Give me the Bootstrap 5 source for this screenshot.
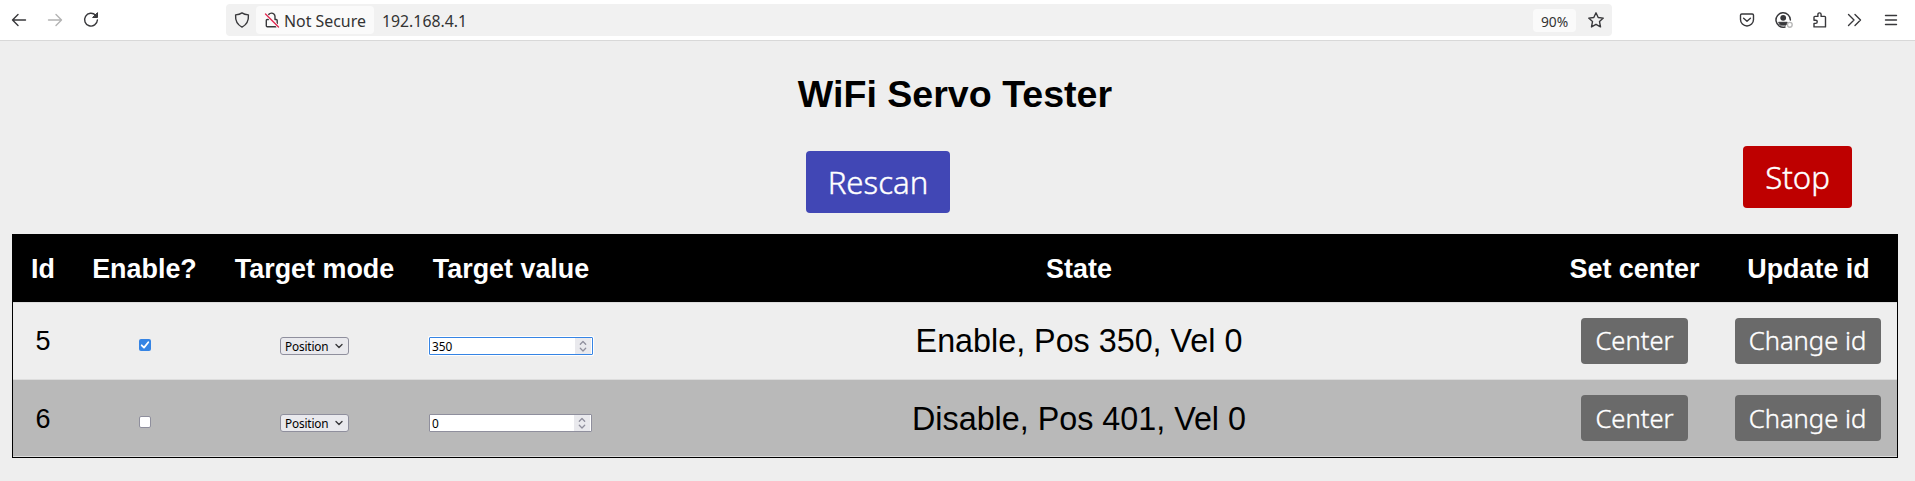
<!DOCTYPE html>
<html lang="en">
<head>
<meta charset="utf-8">
<title>WiFi Servo Tester</title>
<link href="https://cdn.jsdelivr.net/npm/bootstrap@5.3.0/dist/css/bootstrap.min.css" rel="stylesheet">
<style>
body{background:#eee;color:#000;font-family:"Liberation Sans",Arial,sans-serif;overflow:hidden}
svg{display:block;flex:none;fill:none;stroke:#38383b;stroke-width:1.4;stroke-linecap:round;stroke-linejoin:round}
.toolbar{height:41px;background:#fff;border-bottom:1px solid #d8d8d8;padding:4px 16px 0 11px;font-family:"Noto Sans",sans-serif;color:#333}
.nav-icons{width:215px;gap:20px}
.tool-icons{gap:20px}
.tight{margin-right:-1px}
.address{width:1386px;height:32px;background:#f1f1f1;border-radius:4px;padding:0 8px}
.security{width:118px;height:28px;background:#fafafa;border-radius:4px;margin-left:6px;padding-left:8px;font-size:15.9px;gap:4px}
.url{font-size:15.8px;margin-left:8px;line-height:28px;padding-top:2px}
.security span{padding-top:2px;white-space:nowrap;line-height:26px}
.zoomlevel{width:43px;height:23px;background:#fafafa;border-radius:4px;font-size:13.8px;margin-right:12px;line-height:25px}
h1{font-size:37.6px;font-weight:700;line-height:44px;margin:31px 0 0;padding-right:5px}
.actions{height:110px;padding:30px 63px 0 806px}
.act{font-family:"Noto Sans",sans-serif;font-weight:300;-webkit-text-stroke:.4px #fff;color:#fff;border:0;border-radius:4px;padding:0;--bs-btn-hover-color:#fff}
.rescan,.halt{height:62px;font-size:31.2px;line-height:62px}
.rescan{width:144px;background:#4147b5;margin-top:5px}
.halt{width:109px;background:#be0000}
.servos{width:1886px;margin:0 0 0 12px;border:1px solid #000;table-layout:fixed;border-collapse:separate;border-spacing:0;text-align:center;font-size:27px}
.servos th,.servos td{padding:0;vertical-align:middle;border-bottom:1px solid #ddd;line-height:36px}
.servos th{height:68px;background:#000;color:#fff;white-space:nowrap;font-size:26.9px}
.servos td{height:77px}
.servos tr.alt td{background:#b9b9b9}
.servos tr.alt td.shift{padding-top:2px}
.servos td.state{font-size:32.3px}
.small-act{height:46px;font-size:25.6px;line-height:46px;background:#6a6a6a;display:block;margin:auto}
.alt .small-act{padding-top:1px}
.center-act{width:107px}.change-act{width:146px;position:relative;left:-1px}
.tick{width:12px;height:12px;border-radius:2px;margin:8px auto 0;background:#3584e4}
.tick.off{background:#fff;border:1px solid #8f8f9d}
.tick svg{stroke:#fff;stroke-width:1.8}
.mode{width:69px;height:18px;margin:10px auto 0;border:1px solid #8f8f9d;border-radius:3px;background:#e9e9ed;font:11.8px/16px "Noto Sans",sans-serif;padding:0 5px 0 4px;letter-spacing:-.15px}
.amount{width:163px;height:18px;margin:10px 0 0 16px;border:1px solid #8f8f9d;border-radius:1px;background:#fff;font:11.9px/16px "Noto Sans",sans-serif;padding:0 1px 0 2px}
.amount.active{width:164px;border-color:#3584e4;box-shadow:0 0 0 1px #fff}
.spin{width:16px;height:16px;background:#e9e9ed}
.spin svg{stroke:#8f8f9d;stroke-width:1.3}
</style>
</head>
<body>
<header class="toolbar d-flex">
  <div class="nav-icons d-flex align-items-center pb-1">
    <svg width="16" height="16" viewBox="0 0 16 16"><path d="M14.500 8H1.500M7 2.500 1.500 8 7 13.500"/></svg>
    <svg width="16" height="16" viewBox="0 0 16 16" style="stroke:#b3b3b3"><path d="M1.500 8h13M9 2.500 14.500 8 9 13.500"/></svg>
    <svg width="16" height="16" viewBox="0 0 16 16"><path d="M12.600 3.200A6.400 6.400 0 1 0 14.400 8"/><path d="M14.500 1v4.500H10z" fill="#38383b" stroke-width="1"/></svg>
  </div>
  <div class="address d-flex align-items-center">
    <svg width="16" height="16" viewBox="0 0 16 16"><path d="M8 .9C6.300 2.100 4 2.700 1.600 2.900 1.200 8.500 3.200 12.700 8 15.100c4.800-2.400 6.800-6.600 6.400-12.200C12 2.700 9.700 2.100 8 .9z"/></svg>
    <div class="security d-flex align-items-center">
      <svg width="16" height="16" viewBox="0 0 16 16"><path d="M4 4.800A3.500 3.500 0 0 1 11 4.500V7.500h1.200a1 1 0 0 1 1 1V12M4.500 7.500H3.300a1 1 0 0 0-1 1v5.200a1 1 0 0 0 1 1H12"/><path d="m1.500 2 13 13" stroke="#fafafa" stroke-width="2.800"/><path d="m1.500 2 13 13" stroke="#e22850"/></svg>
      <span>Not Secure</span>
    </div>
    <span class="url">192.168.4.1</span>
    <span class="zoomlevel ms-auto text-center">90%</span>
    <svg width="16" height="16" viewBox="0 0 16 16"><path d="m8 .8 2.200 4.700 5.100.6-3.800 3.500 1 5.300L8 12.300l-4.500 2.600 1-5.300L.7 6.100l5.100-.6z"/></svg>
  </div>
  <div class="tool-icons ms-auto d-flex align-items-center pb-1">
    <svg width="16" height="16" viewBox="0 0 16 16"><path d="M2.800 2h10.400c.8 0 1.300.5 1.300 1.300v4.200a6.500 6.500 0 0 1-13 0V3.300C1.500 2.500 2 2 2.800 2zM4.600 6.200 8 9.300l3.400-3.100"/></svg>
    <svg class="tight" width="18" height="16" viewBox="0 0 18 16"><path d="M15.400 8A7.200 7.200 0 1 0 10 15" stroke-width="1.500"/><circle cx="8.200" cy="5.800" r="2.900" fill="#38383b" stroke="none"/><path d="M4 10.300h8.300l-1.300 2.800H5.500z" fill="#38383b" stroke-width="1"/><circle cx="14.800" cy="12.800" r="2.400" stroke="#b8b8b8"/></svg>
    <svg class="tight" width="16" height="16" viewBox="0 0 16 16"><path d="M2 5.300c0-.6.300-.9.900-.9h3V2.500a1.600 1.600 0 0 1 3.200 0v1.900h3.500c.6 0 .9.300.9.900v9.600H2v-3.500h1.700a1.500 1.500 0 0 0 0-3.100H2z"/></svg>
    <svg width="16" height="16" viewBox="0 0 16 16"><path d="M1.500 2.500 7 8l-5.500 5.500M8 2.500 13.500 8 8 13.500"/></svg>
    <svg width="16" height="16" viewBox="0 0 16 16"><path d="M2.500 3.500h11M2.500 8h11M2.500 12.500h11"/></svg>
  </div>
</header>
<main>
  <h1 class="text-center">WiFi Servo Tester</h1>
  <div class="actions d-flex justify-content-between align-items-start">
    <button class="btn act rescan">Rescan</button>
    <button class="btn act halt">Stop</button>
  </div>
  <table class="servos mt-2">
    <colgroup><col style="width:60px"><col style="width:143px"><col style="width:197px"><col style="width:196px"><col style="width:940px"><col style="width:171px"><col style="width:177px"></colgroup>
    <thead><tr><th>Id</th><th>Enable?</th><th>Target mode</th><th>Target value</th><th>State</th><th>Set center</th><th>Update id</th></tr></thead>
    <tbody>
      <tr>
        <td>5</td>
        <td><div class="tick"><svg width="12" height="12" viewBox="0 0 12 12"><path d="m2.700 6.300 2.300 2.300 4.300-5.300"/></svg></div></td>
        <td><div class="mode d-flex align-items-center justify-content-between"><span>Position</span><svg width="8" height="8" viewBox="0 0 8 8"><path d="m1 2.500 3 3 3-3"/></svg></div></td>
        <td><div class="amount active d-flex align-items-center justify-content-between"><span>350</span><span class="spin"><svg width="16" height="16" viewBox="0 0 16 16"><path d="m5.300 6.200 2.700-2.700 2.700 2.700M5.300 10.300 8 13l2.700-2.700"/></svg></span></div></td>
        <td class="state">Enable, Pos 350, Vel 0</td>
        <td><button class="btn act small-act center-act">Center</button></td>
        <td><button class="btn act small-act change-act">Change id</button></td>
      </tr>
      <tr class="alt">
        <td class="shift">6</td>
        <td><div class="tick off"></div></td>
        <td><div class="mode d-flex align-items-center justify-content-between"><span>Position</span><svg width="8" height="8" viewBox="0 0 8 8"><path d="m1 2.500 3 3 3-3"/></svg></div></td>
        <td><div class="amount d-flex align-items-center justify-content-between"><span>0</span><span class="spin"><svg width="16" height="16" viewBox="0 0 16 16"><path d="m5.300 6.200 2.700-2.700 2.700 2.700M5.300 10.300 8 13l2.700-2.700"/></svg></span></div></td>
        <td class="state shift">Disable, Pos 401, Vel 0</td>
        <td><button class="btn act small-act center-act">Center</button></td>
        <td><button class="btn act small-act change-act">Change id</button></td>
      </tr>
    </tbody>
  </table>
</main>
<script src="https://cdn.jsdelivr.net/npm/bootstrap@5.3.0/dist/js/bootstrap.bundle.min.js"></script>
</body>
</html>
